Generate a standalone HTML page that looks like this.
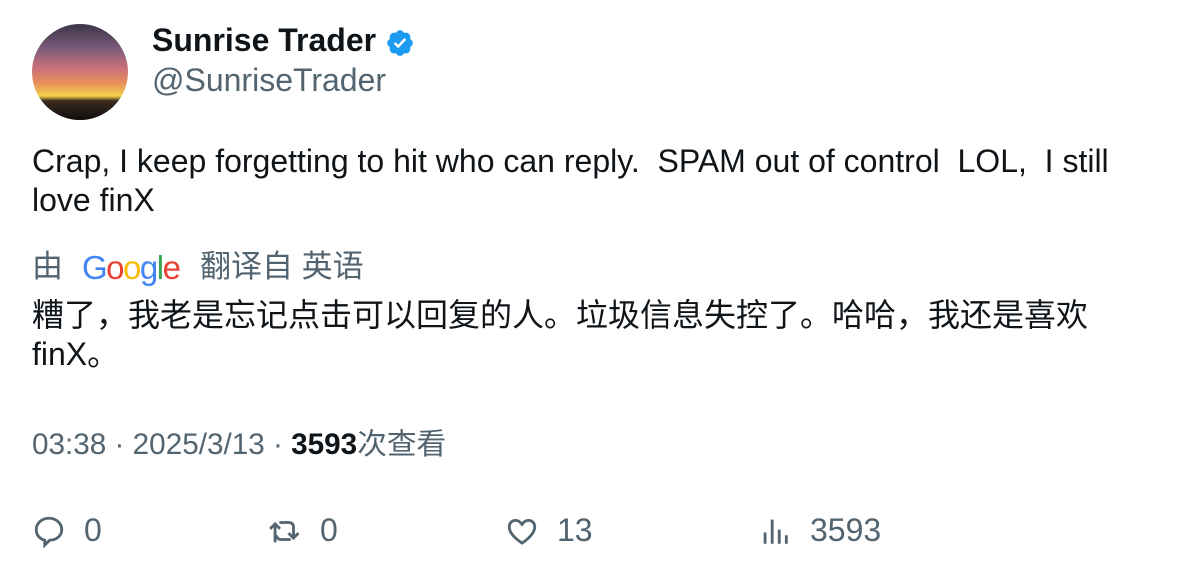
<!DOCTYPE html>
<html><head><meta charset="utf-8"><style>
body{margin:0;width:1196px;height:578px;background:#fff;font-family:"Liberation Sans","Noto Sans CJK SC",sans-serif;color:#0f1419;position:relative;overflow:hidden}
.a{position:absolute}
.av{left:32px;top:24px;width:96px;height:96px;border-radius:50%;overflow:hidden;background:linear-gradient(#3a3448 0%,#7a5a78 25%,#c86f7a 45%,#e8905a 62%,#f7d34a 75%,#3a2a20 80%,#100c0c 100%)}
.g{color:#536471}
.act{top:512px;font-size:32px;color:#536471;display:flex;align-items:center}
.act svg{margin-right:18px}
</style></head><body>
<div class="a av"></div>
<div class="a" style="left:152px;top:22px;font-size:32px;font-weight:bold">Sunrise Trader</div>
<svg class="a" style="left:385px;top:28px" width="30" height="30" viewBox="0 0 24 24"><path fill="#1d9bf0" d="M22.25 12c0-1.43-.88-2.670-2.19-3.34.46-1.39.2-2.9-.81-3.910s-2.52-1.27-3.91-.81c-.66-1.31-1.91-2.19-3.34-2.19s-2.67.88-3.33 2.19c-1.4-.46-2.910-.2-3.920.81s-1.26 2.52-.8 3.91C2.63 9.33 1.75 10.570 1.75 12s.88 2.67 2.2 3.34c-.46 1.39-.21 2.9.8 3.91s2.52 1.26 3.91.81c.67 1.31 1.91 2.19 3.34 2.19s2.68-.88 3.34-2.19c1.39.45 2.9.2 3.91-.81s1.27-2.52.81-3.91c1.31-.67 2.19-1.91 2.19-3.34z"/><path fill="#fff" d="M10.54 16.2l-3.6-3.6 1.42-1.42 2.18 2.19 4.94-5.35 1.47 1.36z"/></svg>
<div class="a g" style="left:152px;top:62px;font-size:32px">@SunriseTrader</div>
<div class="a" style="left:32px;top:142px;font-size:32px;line-height:39px;width:1120px">Crap, I keep forgetting to hit who can reply.&nbsp; SPAM out of control&nbsp; LOL,&nbsp; I still love finX</div>
<div class="a g" style="left:32px;top:241px;font-size:31px">由</div>
<div class="a" style="left:82px;top:249px;font-size:33px;letter-spacing:-1.5px"><span style="color:#4285f4">G</span><span style="color:#ea4335">o</span><span style="color:#fbbc05">o</span><span style="color:#4285f4">g</span><span style="color:#34a853">l</span><span style="color:#ea4335">e</span></div>
<div class="a g" style="left:200px;top:241px;font-size:31px">翻译自 英语</div>
<div class="a" style="left:32px;top:296px;font-size:32px;line-height:39px;width:1120px">糟了，我老是忘记点击可以回复的人。垃圾信息失控了。哈哈，我还是喜欢finX。</div>
<div class="a g" style="left:32px;top:420px;font-size:29.7px">03:38 · 2025/3/13 · <b style="color:#0f1419">3593</b>次查看</div>
<div class="a act" style="left:32px"><svg width="34" height="34" viewBox="0 0 24 24" fill="none" stroke="#536471" stroke-width="2"><path d="M12 3c5 0 9 3.5 9 8s-4.2 7.5-8.5 7.5L9 22v-3.5C5 17.5 3 14.5 3 11c0-4.5 4-8 9-8z"/></svg>0</div>
<div class="a act" style="left:268px"><svg width="34" height="34" viewBox="0 0 24 24" fill="none" stroke="#536471" stroke-width="2"><path d="M5 20V7M1.5 10.5L5 7l3.5 3.5M8 6h7a3 3 0 013 3v8M14.5 13.5L18 17l3.5-3.5M16 18H9a3 3 0 01-3-3"/></svg>0</div>
<div class="a act" style="left:505px"><svg width="34" height="34" viewBox="0 0 24 24" fill="none" stroke="#536471" stroke-width="2"><path d="M12 20.5S3 15 3 9.2C3 6.3 5 4.5 7.4 4.5c2 0 3.5 1.2 4.6 2.8 1.1-1.6 2.6-2.8 4.6-2.8C19 4.5 21 6.3 21 9.2 21 15 12 20.5 12 20.5z"/></svg>13</div>
<div class="a act" style="left:758px"><svg width="34" height="34" viewBox="0 0 24 24" fill="none" stroke="#536471" stroke-width="2"><path d="M5 21v-8M10 21V4M15 21v-10M20 21v-6"/></svg>3593</div>
</body></html>
